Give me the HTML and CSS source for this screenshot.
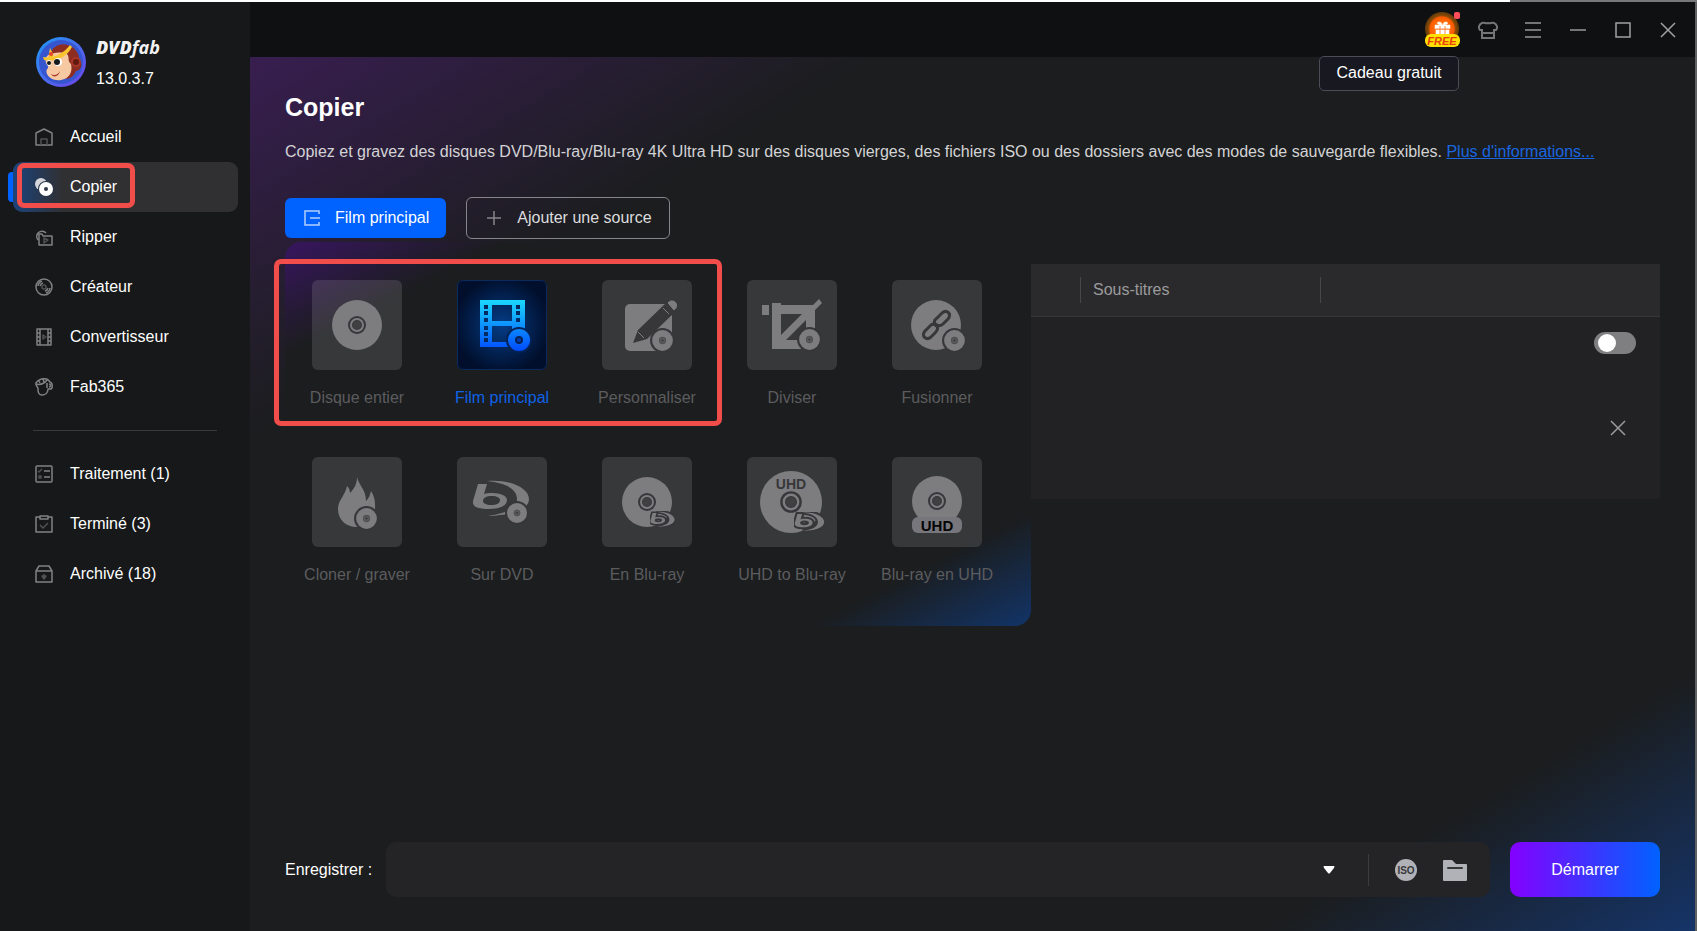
FILE: index.html
```html
<!DOCTYPE html>
<html lang="fr">
<head>
  <meta charset="UTF-8" />
  <title>DVDFab</title>
  <meta name="viewport" content="width=device-width, initial-scale=1.0"/>
  <link rel="stylesheet" href="styles.css">
</head>
<body>
<!-- shared icon parts -->
<svg class="defs" aria-hidden="true">
  <defs>
    <linearGradient id="filmGradient" x1="0" y1="20" x2="0" y2="70" gradientUnits="userSpaceOnUse">
      <stop offset="0" stop-color="#1bd8ff"/>
      <stop offset="1" stop-color="#004dff"/>
    </linearGradient>
    <linearGradient id="logoGradient" x1="0" y1="0" x2="1" y2="1">
      <stop offset="0" stop-color="#1d9bf5"/>
      <stop offset="1" stop-color="#7340ea"/>
    </linearGradient>
    <radialGradient id="giftGradient">
      <stop offset="0" stop-color="#ff8a1f"/>
      <stop offset="0.7" stop-color="#ff5a00"/>
      <stop offset="0.8" stop-color="#8a4a08"/>
      <stop offset="1" stop-color="#5e3a0a"/>
    </radialGradient>
    <symbol id="hub" viewBox="-10 -10 20 20">
      <circle r="9" fill="#37373a"/>
      <circle r="6" fill="none" stroke="#7d7d80" stroke-width="2"/>
      <circle r="4" fill="#404043"/>
    </symbol>
    <symbol id="disc" viewBox="-13 -13 26 26">
      <circle r="12" fill="#37373a"/>
      <circle r="10" fill="#7d7d80"/>
      <circle r="3" fill="#5a5a5d" stroke="#505053"/>
      <circle r="1" fill="#37373a"/>
    </symbol>
    <symbol id="bluray" viewBox="0 0 58 40">
      <path d="M15 1C40-1 57 9 57 19c0 8-10 16-41 17 19-3 29-8 29-17C45 9 34 3 15 1z"/>
      <path fill-rule="evenodd" d="M6 4h9l-3 10c3-1 5-1 8-1 9 0 15 3 15 7 0 6-8 9-18 9C6 29 0 27 1 21zM20 16c-6 0-9 2-9 5 0 2 3 4 8 4 6 0 9-2 9-5 0-2-3-4-8-4z"/>
    </symbol>
  </defs>
</svg>

<div class="top-strip"></div>
<div class="app">
  <aside class="sidebar">
    <div class="brand">
      <svg class="brand-logo" viewBox="0 0 50 50" aria-hidden="true">
        <circle cx="25" cy="25" r="25" fill="url(#logoGradient)"/>
        <circle cx="25" cy="25" r="22" fill="#3556cf"/>
        <path d="M14 17C17 8 27 4 36 10c5 3 8 9 7 14 4 0 3 10-3 10-2 5-6 8-11 8L18 20z" fill="#8d2d22"/>
        <circle cx="40" cy="25" r="5" fill="#a9362b"/>
        <circle cx="40" cy="25" r="3" fill="#64190f"/>
        <path d="M11 19c4-3 15-5 20-2 3 3 0 7 4 10 2 8-2 15-10 16-7 1-12-2-14-6-2-5 2-5 1-8-3-3-3-7-1-10z" fill="#f7c9a3"/>
        <path d="M7 20c10 2 20-3 27-12l2 2C31 20 20 25 8 23zM14 11l4 8-6 3z" fill="#f8c52f"/>
        <circle cx="15" cy="17" r="2" fill="#e5432e"/>
        <ellipse cx="13" cy="26" rx="2" ry="3" fill="#fff"/>
        <ellipse cx="22" cy="25" rx="4" ry="4" fill="#fff"/>
        <circle cx="13" cy="26" r="2" fill="#15181c"/>
        <circle cx="21" cy="25" r="3" fill="#15181c"/>
        <path d="M15 37c3 2 7 1 9-3-1 6-7 7-9 3z" fill="#a83c28"/>
      </svg>
      <div>
        <div class="brand-name">DVD<span>fab</span></div>
        <div class="brand-version">13.0.3.7</div>
      </div>
    </div>

    <nav class="nav">
      <a href="#">
        <svg viewBox="0 0 18 18"><path d="M1 5l8-4 8 4v12H1z"/><path d="M6 17v-6h6v6" class="dim"/></svg>
        Accueil
      </a>
      <a href="#" class="active">
        <svg viewBox="0 0 18 18"><g stroke="none"><circle cx="6" cy="6" r="6" fill="#d5d7dc"/><circle cx="11" cy="11" r="8" fill="#2a3648"/><circle cx="11" cy="11" r="7" fill="#fff"/><circle cx="11" cy="11" r="2" fill="#333b48"/></g></svg>
        Copier
      </a>
      <a href="#">
        <svg viewBox="0 0 18 18"><path d="M3 12A5 5 0 1 1 11 5M4 17V6h3l1 2h9v9z"/><path d="M9 10l4 2-4 3z" class="dim"/></svg>
        Ripper
      </a>
      <a href="#">
        <svg viewBox="0 0 18 18"><circle cx="9" cy="9" r="8"/><circle cx="9" cy="9" r="2" class="dim"/><path d="M3 8a6 6 0 0 1 4-5M5 8a4 4 0 0 1 3-3M15 10a6 6 0 0 1-4 5M13 10a4 4 0 0 1-3 3"/></svg>
        Créateur
      </a>
      <a href="#">
        <svg viewBox="0 0 18 18"><path d="M2 1h14v16H2zM5 1v16M13 1v16M2 5h3M2 9h3M2 13h3M13 5h3M13 9h3M13 13h3"/><path d="M8 7l3 2-3 2z" class="dim"/></svg>
        Convertisseur
      </a>
      <a href="#">
        <svg viewBox="0 0 18 18"><path d="M1 5c3-5 11-6 14-1 3 1 3 7 0 7h-2c0 4-3 6-6 6s-4-3-4-5c1-3-3-4-2-7zM1 6c4 1 8 0 11-4M4 3l1 2M8 1l1 3M12 5v5M14 6c2 0 2 3 0 3"/></svg>
        Fab365
      </a>
      <hr>
      <a href="#">
        <svg viewBox="0 0 18 18"><rect x="1" y="1" width="16" height="16" rx="1"/><path d="M9 6h6M9 12h6"/><path d="M3 6l1 1 3-3M4 11h2v2H4z" class="dim"/></svg>
        Traitement (1)
      </a>
      <a href="#">
        <svg viewBox="0 0 18 18"><path d="M5 2H1v15h16V2h-4M5 1h8v3H5z"/><path d="M5 10l3 3 5-5" class="dim"/></svg>
        Terminé (3)
      </a>
      <a href="#">
        <svg viewBox="0 0 18 18"><path d="M1 6l3-5h10l3 5v11H1zM1 6h16"/><path d="M9 9v4M7 11l2 3 2-3z" class="dim"/></svg>
        Archivé (18)
      </a>
    </nav>
    <div class="highlight highlight-nav"></div>
  </aside>

  <main>
    <header class="titlebar">
      <div class="gift">
        <button type="button" aria-label="Cadeau gratuit">
          <svg width="35" height="35" viewBox="0 0 35 35">
            <circle cx="17" cy="17" r="17" fill="url(#giftGradient)"/>
            <path d="M10 13h15v4H10zM11 18h13v5H11zM17 13c-5 0-6-3-3-3 2 0 3 1 3 3zM18 13c5 0 6-3 3-3-2 0-3 1-3 3z" fill="#fff" stroke="#fff" stroke-width="0.5"/>
            <path d="M15 14v9M20 14v9M10 17h15" stroke="#ff8a4a" stroke-width="1"/>
            <rect y="22" width="35" height="13" rx="6" fill="#ffe000"/>
            <text x="17" y="33" text-anchor="middle" class="free">FREE</text>
            <rect x="29" y="0" width="6" height="7" rx="2" fill="#ff4d5a"/>
          </svg>
        </button>
        <div class="tooltip" role="tooltip">Cadeau gratuit</div>
      </div>
      <button type="button" aria-label="Thème"><svg width="20" height="18" viewBox="0 0 20 18"><path d="M4 2c3-1 3 1 6 0 3 1 3-1 6 0 3 1 4 5 2 7h-2v8H4V9H2C0 7 1 3 4 2zM4 12h12"/></svg></button>
      <button type="button" aria-label="Menu"><svg width="16" height="16" viewBox="0 0 16 16"><path d="M0 1h16M0 8h16M0 15h16"/></svg></button>
      <button type="button" aria-label="Réduire"><svg width="16" height="16" viewBox="0 0 16 16"><path d="M0 8h16"/></svg></button>
      <button type="button" aria-label="Agrandir" class="bright"><svg width="16" height="16" viewBox="0 0 16 16"><path d="M1 1h14v14H1z"/></svg></button>
      <button type="button" aria-label="Fermer" class="bright"><svg width="16" height="16" viewBox="0 0 16 16"><path d="M1 1l14 14M15 1L1 15"/></svg></button>
    </header>

    <div class="content">
      <h1>Copier</h1>
      <p class="intro">Copiez et gravez des disques DVD/Blu-ray/Blu-ray 4K Ultra HD sur des disques vierges, des fichiers ISO ou des dossiers avec des modes de sauvegarde flexibles. <a href="#">Plus d'informations...</a></p>

      <div class="actions">
        <button type="button" class="btn btn-primary">
          <svg width="18" height="18" viewBox="0 0 18 18"><path d="M16 5V2H2v14h14v-3M7 9h10"/></svg>
          Film principal
        </button>
        <button type="button" class="btn btn-outline">
          <svg width="18" height="18" viewBox="0 0 18 18"><path d="M9 2v14M2 9h14"/></svg>
          Ajouter une source
        </button>
      </div>

      <div class="workspace">
        <section class="modes">
          <button type="button" class="mode">
            <svg viewBox="0 0 90 90"><circle cx="45" cy="45" r="25"/><use href="#hub" x="35" y="35" width="20" height="20"/></svg>
            Disque entier
          </button>
          <button type="button" class="mode selected">
            <svg viewBox="0 0 90 90" fill="url(#filmGradient)">
              <path fill-rule="evenodd" d="M23 20h45v47H23zM35 25v16h20V25zM35 46v16h20V46zM27 25v4h4v-4zM27 31v4h4v-4zM27 38v4h4v-4zM27 46v4h4v-4zM27 52v4h4v-4zM27 58v4h4v-4zM59 25v4h4v-4zM59 31v4h4v-4zM59 38v4h4v-4z"/>
              <circle cx="62" cy="60" r="13" fill="#032257"/>
              <circle cx="62" cy="60" r="11"/>
              <circle cx="62" cy="60" r="3" fill="#033aa8" stroke="#032257" stroke-width="2"/>
            </svg>
            Film principal
          </button>
          <button type="button" class="mode">
            <svg viewBox="0 0 90 90">
              <rect x="23" y="24" width="47" height="47" rx="5"/>
              <path d="M31 63l5-13 29-28 9 9-29 28z" fill="#37373a"/>
              <path d="M66 23l1-1a4 4 0 0 1 6 7l-1 1zM61 28l6 6" stroke="#7d7d80"/>
              <path d="M36 52l6 6" stroke="#7d7d80"/>
              <use href="#disc" x="47" y="47" width="27" height="27"/>
            </svg>
            Personnaliser
          </button>
          <button type="button" class="mode">
            <svg viewBox="0 0 90 90">
              <path d="M15 25h7v10h-7zM25 23h9v2h32l6-6 3 4-7 7v29h-9V40L39 60h22v9H25zM34 34v21l21-21z" fill-rule="evenodd"/>
              <use href="#disc" x="49" y="46" width="27" height="27"/>
            </svg>
            Diviser
          </button>
          <button type="button" class="mode">
            <svg viewBox="0 0 90 90">
              <circle cx="44" cy="45" r="25"/>
              <g fill="none" stroke="#37373a" stroke-width="3" stroke-linecap="round">
                <path d="M45 45c-4-2-3-5 0-7l5-5c5-4 10 1 6 6l-5 5c-2 2-4 2-6 1"/>
                <path d="M43 45c4 2 3 5 0 8l-4 4c-5 4-10-1-6-6l5-5c2-2 4-2 5-1"/>
              </g>
              <use href="#disc" x="49" y="47" width="27" height="27"/>
            </svg>
            Fusionner
          </button>
          <button type="button" class="mode">
            <svg viewBox="0 0 90 90">
              <path d="M45 20c2 9 9 12 9 24 3-3 4-6 5-10 5 8 4 14 4 20 0 11-8 16-18 16-12 0-19-8-19-18 0-9 7-13 9-23 2 2 3 4 3 7 4-4 7-9 7-16z"/>
              <use href="#disc" x="41" y="48" width="27" height="27"/>
            </svg>
            Cloner / graver
          </button>
          <button type="button" class="mode">
            <svg viewBox="0 0 90 90">
              <use href="#bluray" x="15" y="23" width="58" height="40"/>
              <use href="#disc" x="47" y="43" width="26" height="26"/>
            </svg>
            Sur DVD
          </button>
          <button type="button" class="mode">
            <svg viewBox="0 0 90 90">
              <circle cx="45" cy="45" r="25"/>
              <use href="#hub" x="35" y="35" width="20" height="20"/>
              <use href="#bluray" class="cut" x="48" y="54" width="25" height="18"/>
              <use href="#bluray" x="48" y="54" width="25" height="18"/>
            </svg>
            En Blu-ray
          </button>
          <button type="button" class="mode">
            <svg viewBox="0 0 90 90">
              <circle cx="44" cy="45" r="31"/>
              <use href="#hub" x="32" y="33" width="24" height="24"/>
              <text x="44" y="32" text-anchor="middle" class="uhd-small">UHD</text>
              <use href="#bluray" class="cut" x="47" y="55" width="31" height="21"/>
              <use href="#bluray" x="47" y="55" width="31" height="21"/>
            </svg>
            UHD to Blu-ray
          </button>
          <button type="button" class="mode">
            <svg viewBox="0 0 90 90">
              <circle cx="45" cy="44" r="25"/>
              <use href="#hub" x="35" y="34" width="20" height="20"/>
              <rect x="20" y="60" width="50" height="16" rx="6" fill="#77767c"/>
              <text x="45" y="74" text-anchor="middle" class="uhd">UHD</text>
            </svg>
            Blu-ray en UHD
          </button>
          <div class="highlight highlight-modes"></div>
        </section>

        <table class="tracks">
          <thead>
            <tr><th class="col-name"></th><th class="col-subs"><span>Sous-titres</span></th><th><span></span></th></tr>
          </thead>
          <tbody>
            <tr class="row-toggle">
              <td colspan="3"><input type="checkbox" class="switch" aria-label="Activer"></td>
            </tr>
            <tr class="row-remove">
              <td colspan="3">
                <button type="button" aria-label="Supprimer"><svg width="16" height="16" viewBox="0 0 16 16"><path d="M1 1l14 14M15 1L1 15"/></svg></button>
              </td>
            </tr>
          </tbody>
        </table>
      </div>

      <form class="save-bar">
        <label for="saveTo">Enregistrer :</label>
        <div class="save-field">
          <select id="saveTo"><option></option></select>
          <svg class="caret" width="12" height="8" viewBox="0 0 12 8"><path d="M1 0h10q1 0 0 2L7 7Q6 8 5 7L1 2Q0 0 1 0z"/></svg>
          <button type="button" aria-label="ISO">
            <svg width="24" height="24" viewBox="0 0 24 24"><circle cx="12" cy="12" r="11"/><text x="12" y="16" text-anchor="middle" class="iso">ISO</text></svg>
          </button>
          <button type="button" aria-label="Dossier">
            <svg width="24" height="24" viewBox="0 0 24 24"><path d="M0 3q0-1 1-1h8l4 4h10q1 0 1 1v15q0 1-1 1H1q-1 0-1-1z"/><path d="M5 10h14" stroke="#38383b" stroke-width="2" stroke-linecap="round"/></svg>
          </button>
        </div>
        <button type="button" class="start">Démarrer</button>
      </form>
    </div>
  </main>
</div>
</body>
</html>
```
FILE: styles.css
```css
* {
  box-sizing: border-box;
}

body {
  margin: 0;
  min-height: 100vh;
  display: flex;
  flex-direction: column;
  background: #1b1d1e;
  color: #fff;
  font: 16px/20px "Liberation Sans", Arial, sans-serif;
}

button, select {
  font: inherit;
  color: inherit;
  background: none;
  border: 0;
  padding: 0;
  cursor: pointer;
}

.defs {
  position: absolute;
  width: 0;
  height: 0;
}

.top-strip {
  height: 2px;
  background: linear-gradient(to right, #fff 89%, #77787a 89%);
}

.app {
  flex: 1;
  display: flex;
  border-right: 2px solid #606163;
}

/* sidebar */
.sidebar {
  position: relative;
  flex: 0 0 250px;
  padding-top: 35px;
  background: #161819;
}

.brand {
  display: flex;
  gap: 10px;
  height: 50px;
  margin: 0 0 25px 36px;
}

.brand-logo {
  width: 50px;
  height: 50px;
}

.brand-name {
  margin-bottom: 12px;
  font: italic 800 18px/20px "Open Sans", sans-serif;
  color: #f2f2f2;
}

.brand-name span {
  font-weight: 700;
}

.nav a {
  position: relative;
  display: flex;
  align-items: center;
  gap: 17px;
  height: 50px;
  margin: 0 12px 0 13px;
  padding-left: 22px;
  border-radius: 9px;
  color: #fff;
  text-decoration: none;
}

.nav a.active {
  background: linear-gradient(to right, #1c437b, #303032 50px);
}

.nav a.active::before {
  content: "";
  position: absolute;
  left: -5px;
  top: 10px;
  width: 5px;
  height: 30px;
  background: #0062ff;
  border-radius: 4px 0 0 4px;
}

.nav svg {
  width: 18px;
  height: 18px;
  fill: none;
  stroke: #808183;
  stroke-width: 1.5;
  stroke-linejoin: round;
}

.nav .dim {
  stroke: #505153;
}

.nav hr {
  height: 1px;
  margin: 18px 33px;
  border: 0;
  background: #38393b;
}

.highlight {
  position: absolute;
  border: 5px solid #f04d4b;
  border-radius: 7px;
  pointer-events: none;
}

.highlight-nav {
  left: 17px;
  top: 161px;
  width: 118px;
  height: 45px;
}

.highlight-modes {
  left: -11px;
  top: 17px;
  width: 448px;
  height: 167px;
}

/* main area */
main {
  flex: 1;
  min-width: 0;
  display: flex;
  flex-direction: column;
}

.titlebar {
  display: flex;
  justify-content: flex-end;
  align-items: center;
  gap: 10px;
  height: 55px;
  padding-right: 10px;
  background: #0f1011;
}

.titlebar button {
  display: flex;
  align-items: center;
  justify-content: center;
  width: 35px;
  height: 35px;
}

.titlebar button svg {
  fill: none;
  stroke: #747577;
  stroke-width: 2;
}

.titlebar .bright svg {
  stroke: #a0a1a3;
  stroke-width: 1.5;
}

.gift {
  position: relative;
}

.titlebar .gift svg {
  stroke: none;
}

.gift .free {
  font: italic bold 11px "Liberation Sans", sans-serif;
  fill: #e8420c;
}

.tooltip {
  position: absolute;
  right: 1px;
  top: 44px;
  width: 140px;
  padding: 6px 0 7px;
  text-align: center;
  white-space: nowrap;
  background: #171820;
  border: 1px solid #4b4c57;
  border-radius: 5px;
}

.content {
  flex: 1;
  display: flex;
  flex-direction: column;
  padding: 35px 35px 34px;
  background: linear-gradient(to bottom right, #381e50, #1b1d1e 22%, #1b1d1e 85%, #153468);
}

h1 {
  margin: 0 0 20px;
  font-size: 25px;
  line-height: 30px;
}

.intro {
  margin: 0 0 35px;
  color: #d3d3d5;
}

.intro a {
  color: #1a66e0;
}

.actions {
  display: flex;
  align-items: center;
  gap: 20px;
  margin-bottom: 3px;
}

.btn {
  display: flex;
  align-items: center;
  gap: 14px;
  height: 40px;
  padding: 0 17px 0 18px;
  border-radius: 6px;
}

.btn svg {
  fill: none;
  stroke: #b4d0ff;
  stroke-width: 1.5;
}

.btn-primary {
  background: #0062ff;
}

.btn-outline {
  height: 42px;
  border: 1px solid #85858a;
  color: #dcdcde;
}

.btn-outline svg {
  stroke: #858588;
}

.workspace {
  display: flex;
  align-items: flex-start;
  margin-bottom: 40px;
}

.modes {
  position: relative;
  flex: 0 0 746px;
  display: grid;
  grid-template-columns: repeat(5, 144px);
  gap: 49px 1px;
  padding: 38px 0 41px;
  border-radius: 16px;
  background: linear-gradient(to bottom right, #381560, #1b1d1e 15%, #1b1d1e 85%, #123468);
}

.mode {
  display: flex;
  flex-direction: column;
  align-items: center;
  gap: 18px;
  color: #5c5c5f;
  white-space: nowrap;
}

.mode > svg {
  width: 90px;
  height: 90px;
  border-radius: 6px;
  background: rgba(255, 255, 255, 0.12);
}

.mode:not(.selected) > svg {
  fill: #7d7d80;
}

.mode.selected {
  color: #0f62e6;
}

.mode.selected > svg {
  background: radial-gradient(#043c86, #010f2c 75%);
  outline: 1px solid #0d2a5c;
  outline-offset: -1px;
}

.mode .cut {
  fill: #37373a;
  stroke: #37373a;
  stroke-width: 8;
}

.uhd-small {
  font: bold 14px "Liberation Sans", sans-serif;
  fill: #37373a;
}

.uhd {
  font: bold 15px "Liberation Sans", sans-serif;
  fill: #050505;
}

/* subtitle table */
.tracks {
  flex: 1;
  display: table;
  table-layout: fixed;
  margin-top: 22px;
  border-collapse: collapse;
  background: #222224;
}

.tracks th {
  height: 52px;
  padding: 0;
  background: #2a2a2c;
  border-bottom: 1px solid #37373a;
  color: #9b9b9e;
  font-weight: normal;
  text-align: left;
}

.tracks th span {
  display: block;
  height: 26px;
  padding-left: 12px;
  border-left: 1px solid #48484b;
  line-height: 26px;
}

.col-name {
  width: 49px;
}

.col-subs {
  width: 240px;
}

.tracks td {
  padding: 0 24px 0 0;
  text-align: right;
}

.row-toggle td {
  height: 54px;
}

.row-remove td {
  height: 129px;
  padding-right: 34px;
  padding-bottom: 8px;
}

.tracks svg {
  display: block;
  stroke: #9b9b9e;
  stroke-width: 1.5;
}

.switch {
  appearance: none;
  width: 42px;
  height: 22px;
  margin: 0;
  padding: 2px 4px;
  border-radius: 11px;
  background: #7f7f81;
  vertical-align: middle;
  cursor: pointer;
}

.switch::before {
  content: "";
  display: block;
  width: 18px;
  height: 18px;
  border-radius: 50%;
  background: #fff;
}

.switch:checked {
  background: #0062ff;
}

.switch:checked::before {
  margin-left: auto;
}

/* output bar */
.save-bar {
  display: flex;
  align-items: center;
  margin-top: auto;
}

.save-bar label {
  width: 101px;
}

.save-field {
  position: relative;
  flex: 1;
  display: flex;
  align-items: center;
  gap: 25px;
  height: 55px;
  margin-right: 20px;
  padding-right: 23px;
  border-radius: 10px;
  background: #242426;
}

.save-field select {
  flex: 1;
  height: 32px;
  padding-left: 12px;
  appearance: none;
  border-right: 1px solid #3c3c3f;
}

.save-field button {
  width: 24px;
  height: 24px;
}

.save-field svg {
  display: block;
  fill: #b1b2b8;
}

.save-field .caret {
  position: absolute;
  right: 155px;
  fill: #fff;
  pointer-events: none;
}

.iso {
  font: bold 10px "Liberation Sans", sans-serif;
  fill: #38383b;
}

.start {
  width: 150px;
  height: 55px;
  border-radius: 10px;
  background: linear-gradient(to right, #8400ff, #0062ff);
}
```
